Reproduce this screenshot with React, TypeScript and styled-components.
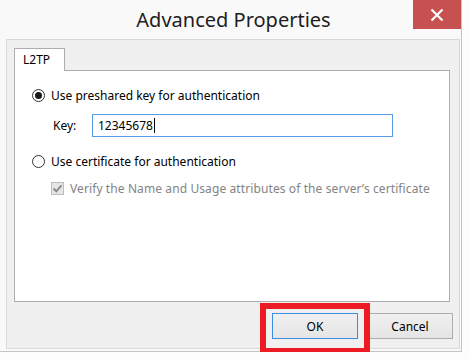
import React from "react";
import styled, { createGlobalStyle } from "styled-components";

const GlobalStyle = createGlobalStyle`
  html, body {
    margin: 0;
    padding: 0;
    background: #fdfdfd;
    font-family: "Noto Sans", "Open Sans", sans-serif;
    font-size: 12px;
    color: #000;
  }
`;

const StyledWindow = styled.div`
  position: relative;
  width: 462px;
  height: 352px;
  box-sizing: border-box;
  background: #f9f9f9;
  border-right: 1px solid #c4c4c4;
  border-bottom: 1px solid #c4c4c4;
  display: flex;
  flex-direction: column;
`;

const StyledTitleBar = styled.div`
  height: 39px;
  display: flex;
  justify-content: center;
  position: relative;
`;

const StyledTitle = styled.div`
  font-size: 20px;
  line-height: 26px;
  padding-top: 7px;
  padding-left: 6px;
  color: #1e1e1e;
`;

const StyledClose = styled.div`
  position: absolute;
  top: 0;
  right: 0;
  width: 48px;
  height: 29px;
  background: #c75050;
  display: flex;
  align-items: center;
  justify-content: center;
`;

const StyledClient = styled.div`
  margin: 0 1px 2px 6px;
  flex: 1;
  background: #f0f0f0;
  border: 1px solid #d9d9d9;
  padding: 8px 8px 0 7px;
  display: flex;
  flex-direction: column;
`;

const StyledTabStrip = styled.div`
  display: flex;
  position: relative;
  z-index: 1;
  margin-bottom: -1px;
`;

const StyledTab = styled.div`
  width: 51px;
  height: 23px;
  box-sizing: border-box;
  background: #fff;
  border: 1px solid #adadad;
  border-bottom: none;
  padding-left: 8px;
  line-height: 22px;
`;

const StyledPanel = styled.div`
  width: 436px;
  height: 232px;
  box-sizing: border-box;
  background: #fff;
  border: 1px solid #adadad;
  padding: 16px 0 0 17px;
  display: flex;
  flex-direction: column;
`;

const StyledOptionRow = styled.div<{ $top: number; $indent?: number }>`
  display: flex;
  align-items: center;
  height: 16px;
  margin-top: ${(p) => p.$top}px;
  padding-left: ${(p) => p.$indent || 0}px;
  white-space: nowrap;
`;

const StyledRadio = styled.div<{ $checked?: boolean }>`
  width: 13px;
  height: 13px;
  box-sizing: border-box;
  border-radius: 50%;
  border: 1px solid #333;
  background: #fff;
  margin-right: 6px;
  display: flex;
  align-items: center;
  justify-content: center;
  flex-shrink: 0;

  &::after {
    content: "";
    display: ${(p) => (p.$checked ? "block" : "none")};
    width: 7px;
    height: 7px;
    border-radius: 50%;
    background: #1a1a1a;
  }
`;

const StyledCheckbox = styled.div`
  width: 13px;
  height: 13px;
  box-sizing: border-box;
  border: 1px solid #bcbcbc;
  background: #e6e6e6;
  margin-right: 6px;
  display: flex;
  align-items: center;
  justify-content: center;
  flex-shrink: 0;
`;

const StyledLabel = styled.span<{ $disabled?: boolean }>`
  color: ${(p) => (p.$disabled ? "#838383" : "#000")};
  letter-spacing: ${(p) => (p.$disabled ? "0.1px" : "0")};
`;

const StyledKeyRow = styled.div`
  display: flex;
  align-items: center;
  margin-top: 11px;
  padding-left: 21px;
`;

const StyledKeyLabel = styled.span`
  width: 39px;
`;

const StyledInput = styled.div`
  width: 301px;
  height: 23px;
  box-sizing: border-box;
  border: 1px solid #569de5;
  padding-left: 5px;
  display: flex;
  align-items: center;
`;

const StyledCaret = styled.span`
  display: inline-block;
  width: 1px;
  height: 15px;
  background: #000;
  margin-left: 1px;
`;

const StyledButtonRow = styled.div`
  display: flex;
  justify-content: flex-end;
  gap: 9px;
  margin-top: 11px;
  margin-right: -2px;
`;

const StyledButton = styled.div<{ $default?: boolean }>`
  width: 86px;
  height: 26px;
  box-sizing: border-box;
  border: 1px solid ${(p) => (p.$default ? "#3c8ee3" : "#adadad")};
  background: linear-gradient(#f0f0f0, #e5e5e5);
  display: flex;
  align-items: center;
  justify-content: center;
  font-size: 12px;
`;

const StyledHighlight = styled.div`
  position: absolute;
  left: 260px;
  top: 303px;
  width: 110px;
  height: 51px;
  box-sizing: border-box;
  border: 6px solid #ed1c24;
  pointer-events: none;
`;

export default function App() {
  return (
    <>
      <GlobalStyle />
      <StyledWindow>
        <StyledTitleBar>
          <StyledTitle>Advanced Properties</StyledTitle>
          <StyledClose>
            <svg width="14" height="14" viewBox="0 0 14 14">
              <path d="M1.5 1.5 L12.5 12.5 M12.5 1.5 L1.5 12.5" stroke="#fff" strokeWidth="2.2" />
            </svg>
          </StyledClose>
        </StyledTitleBar>
        <StyledClient>
          <StyledTabStrip>
            <StyledTab>L2TP</StyledTab>
          </StyledTabStrip>
          <StyledPanel>
            <StyledOptionRow $top={0}>
              <StyledRadio $checked />
              <StyledLabel>Use preshared key for authentication</StyledLabel>
            </StyledOptionRow>
            <StyledKeyRow>
              <StyledKeyLabel>Key:</StyledKeyLabel>
              <StyledInput>
                12345678
                <StyledCaret />
              </StyledInput>
            </StyledKeyRow>
            <StyledOptionRow $top={16}>
              <StyledRadio />
              <StyledLabel>Use certificate for authentication</StyledLabel>
            </StyledOptionRow>
            <StyledOptionRow $top={11} $indent={19}>
              <StyledCheckbox>
                <svg width="11" height="11" viewBox="0 0 11 11">
                  <path d="M1.5 5.5 L4.3 8.3 L9.5 2.3" stroke="#8a8a8a" strokeWidth="2" fill="none" />
                </svg>
              </StyledCheckbox>
              <StyledLabel $disabled>
                Verify the Name and Usage attributes of the server’s certificate
              </StyledLabel>
            </StyledOptionRow>
          </StyledPanel>
          <StyledButtonRow>
            <StyledButton $default>OK</StyledButton>
            <StyledButton>Cancel</StyledButton>
          </StyledButtonRow>
        </StyledClient>
        <StyledHighlight />
      </StyledWindow>
    </>
  );
}
